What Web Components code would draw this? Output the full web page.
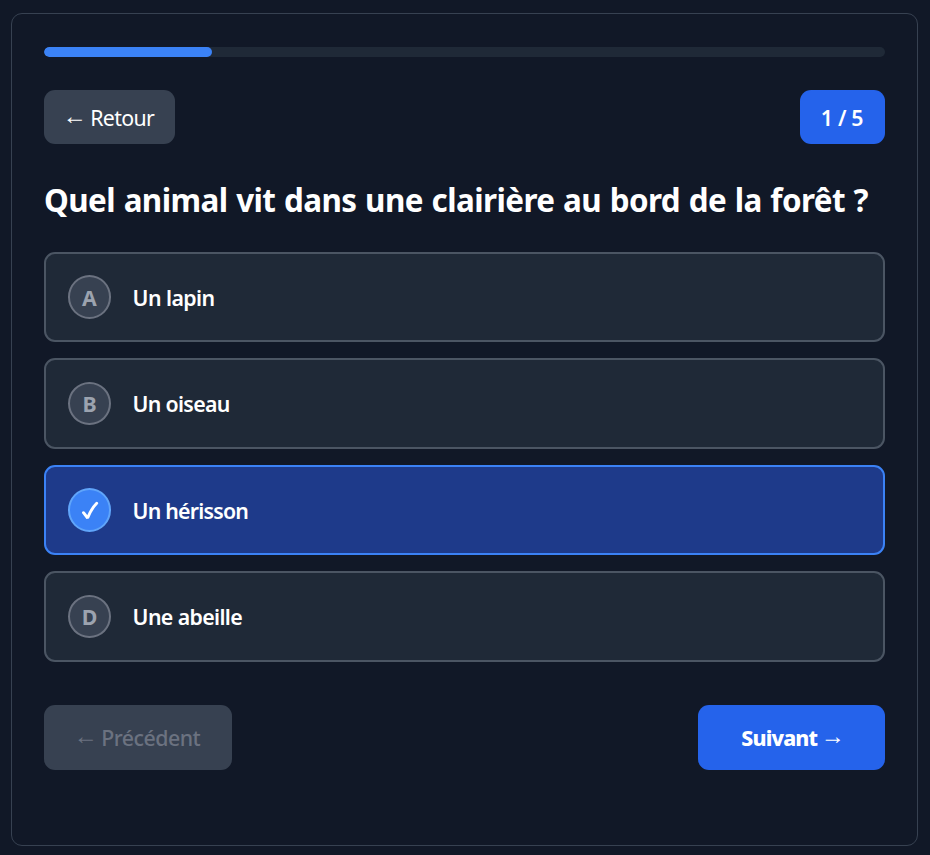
<!DOCTYPE html>
<html lang="fr"><head><meta charset="utf-8"><title>Quiz</title>
<style>
html,body{margin:0;height:100%;background:#111827}
body{font-family:"Noto Sans","Open Sans",sans-serif;color:#fff;overflow:hidden}
</style></head><body>
<quiz-card>
<quiz-progress slot="progress"></quiz-progress>
<quiz-button slot="top" class="back"><quiz-arrow>←</quiz-arrow><quiz-label w="64">Retour</quiz-label></quiz-button>
<quiz-button slot="top" class="count"><quiz-label w="42.5">1 / 5</quiz-label></quiz-button>
<quiz-label slot="title" w="824" style="word-spacing:1px">Quel animal vit dans une clairière au bord de la forêt ?</quiz-label>
<quiz-option letter="A"><quiz-label w="82">Un lapin</quiz-label></quiz-option>
<quiz-option letter="B"><quiz-label w="97">Un oiseau</quiz-label></quiz-option>
<quiz-option letter="C" selected><quiz-label w="115.5">Un hérisson</quiz-label></quiz-option>
<quiz-option letter="D"><quiz-label w="109.5">Une abeille</quiz-label></quiz-option>
<quiz-button slot="bottom" class="prev"><quiz-arrow>←</quiz-arrow><quiz-label w="99">Précédent</quiz-label></quiz-button>
<quiz-button slot="bottom" class="next"><quiz-label w="76">Suivant</quiz-label><quiz-arrow>→</quiz-arrow></quiz-button>
</quiz-card>
<script>
function define(name, html, setup){
  customElements.define(name, class extends HTMLElement{
    constructor(){super();this.attachShadow({mode:"open"}).innerHTML=html;}
    connectedCallback(){if(setup)setup(this,this.shadowRoot);}
  });
}
// A one-line label whose letter spacing adapts to a given width.
define("quiz-label",`<style>:host{display:inline-block;white-space:pre}</style><slot></slot>`,el=>{
  const w=+el.getAttribute("w");
  requestAnimationFrame(()=>{const n=el.textContent.length;
    const now=el.getBoundingClientRect().width;
    el.style.letterSpacing=((w-now)/n)+"px";});
});
define("quiz-arrow",`<style>:host{display:flex;justify-content:center;font:400 24px/24px "Liberation Sans",sans-serif;width:18px;padding-bottom:3px}span{flex:none}</style><span><slot></slot></span>`);
define("quiz-card",`<style>
:host{display:flex;flex-direction:column;box-sizing:border-box;margin:13px 12px 0 11px;height:833px;border:1px solid #374151;border-radius:11px;padding:33px 32px}
.row{display:flex;justify-content:space-between;align-items:center}
.top{margin-top:33px;height:54px}
h1{margin:32px 0 0;height:48px;font-size:31.4px;line-height:48px;font-weight:700}
.opts{display:flex;flex-direction:column;gap:16px;margin-top:28px}
.bottom{margin-top:43px}
</style><slot name="progress"></slot><div class="row top"><slot name="top"></slot></div>
<h1><slot name="title"></slot></h1><div class="opts"><slot></slot></div><div class="row bottom"><slot name="bottom"></slot></div>`);
define("quiz-progress",`<style>:host{display:block;height:10px;border-radius:5px;background:#1f2937;overflow:hidden}div{width:20%;height:100%;border-radius:5px;background:#3b82f6}</style><div></div>`);
define("quiz-button",`<style>
:host{display:flex;align-items:center;justify-content:center;gap:6.5px;box-sizing:border-box;border-radius:11px;font-size:21.33px}
:host(.back){width:131px;height:54px;background:#374151;padding-left:1px}
:host(.count){width:85px;height:54px;background:#2563eb;font-weight:600;padding-right:1px}
:host(.prev){width:188px;height:65px;background:#374151;color:#6b7280;font-weight:500;padding-left:1px}
:host(.next){width:187px;height:65px;background:#2563eb;font-weight:800}
</style><slot></slot>`);
define("quiz-option",`<style>
:host{display:flex;align-items:center;box-sizing:border-box;height:90.4px;padding:0 22px;gap:21.6px;border:2px solid #4b5563;border-radius:11px;background:#1f2937;font-size:21.33px;font-weight:600}
.b{display:flex;align-items:center;justify-content:center;box-sizing:border-box;width:43px;height:43.6px;border:2px solid #6b7280;border-radius:50%;background:#374151;color:#9ca3af;font-weight:700}
::slotted(*){padding-top:.4px}
:host([selected]){background:#1e3a8a;border-color:#3b82f6}
:host([selected]) .b{background:#3b82f6;border-color:#60a5fa;color:#fff}
svg{width:20px;height:22px}
</style><span class="b"></span><slot></slot>`,(el,r)=>{
  const b=r.querySelector(".b");
  if(el.hasAttribute("selected"))b.innerHTML='<svg viewBox="0 0 20 22"><path d="M3.5 13.7 7.6 19C10 13 12.4 8.5 16.7 4.2" fill="none" stroke="#fff" stroke-width="2.9" stroke-linecap="round" stroke-linejoin="bevel"/></svg>';
  else b.textContent=el.getAttribute("letter");
});
</script></body></html>
